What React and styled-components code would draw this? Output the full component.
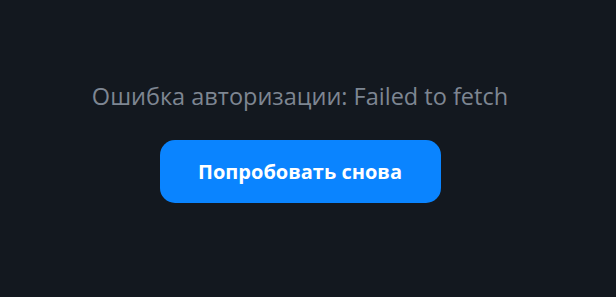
import React from "react";
import styled, { createGlobalStyle } from "styled-components";

const Global = createGlobalStyle`
  html, body { margin: 0; padding: 0; background: #13181f; }
  body { font-family: "Open Sans", "Noto Sans", sans-serif; }
`;

const Screen = styled.div`
  box-sizing: border-box;
  width: 100%;
  height: 297px;
  padding: 80px 16px 0 0;
  display: flex;
  flex-direction: column;
  align-items: center;
  background: #13181f;
`;

const Message = styled.p`
  margin: 0;
  font-size: 23.5px;
  line-height: 32px;
  color: #7e8692;
  font-weight: 400;
  white-space: nowrap;
`;

const RetryButton = styled.button`
  margin-top: 28px;
  width: 281px;
  height: 63px;
  border: none;
  border-radius: 15px;
  background: #0a84ff;
  color: #ffffff;
  font-family: "Open Sans", "Noto Sans", sans-serif;
  font-size: 20px;
  font-weight: 700;
  cursor: pointer;
`;

export default function App() {
  return (
    <>
      <Global />
      <Screen>
        <Message>Ошибка авторизации: Failed to fetch</Message>
        <RetryButton>Попробовать снова</RetryButton>
      </Screen>
    </>
  );
}
